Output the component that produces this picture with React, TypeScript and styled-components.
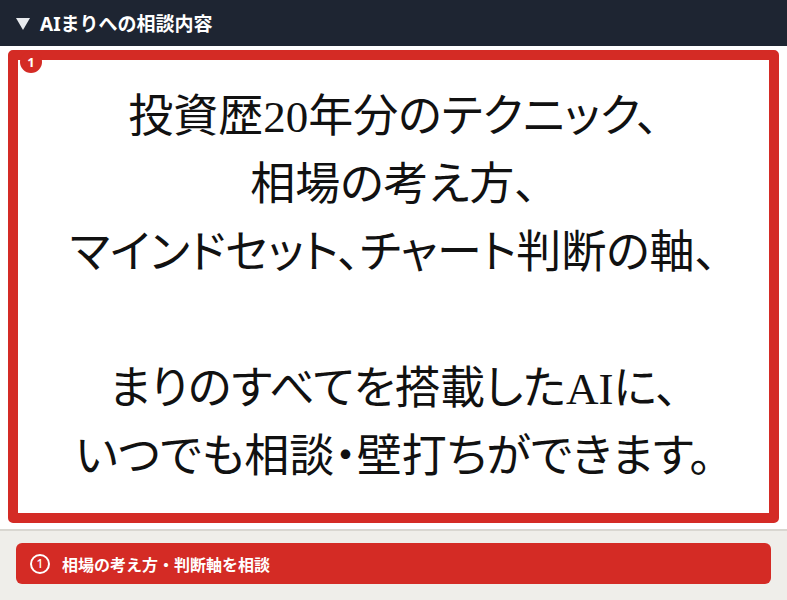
import React from 'react'
import styled, { createGlobalStyle } from 'styled-components'

const GlobalStyle = createGlobalStyle`
  html, body {
    margin: 0;
    padding: 0;
    background: #efeeea;
  }
  body {
    font-family: "Noto Sans", "Noto Sans CJK JP", sans-serif;
  }
`

const Page = styled.div`
  width: 787px;
  height: 600px;
  display: flex;
  flex-direction: column;
  background: #efeeea;
  overflow: hidden;
`

const Header = styled.div`
  height: 46px;
  flex-shrink: 0;
  background: #1e2532;
  display: flex;
  align-items: center;
  gap: 10px;
  padding-left: 16px;
  color: #fff;
  font-family: "Noto Sans", "Noto Sans CJK JP", sans-serif;
  font-weight: 700;
  font-size: 19px;
`

const Caret = styled.span`
  width: 0;
  height: 0;
  border-left: 7px solid transparent;
  border-right: 7px solid transparent;
  border-top: 12px solid #e8eaee;
  margin-top: 1px;
`

const Stage = styled.div`
  background: #fff;
  padding: 4px 8px 6px 8px;
  border-bottom: 2px solid #d9d7d1;
`

const Slide = styled.div`
  position: relative;
  height: 453px;
  border: 10px solid #d42b25;
  border-radius: 5px;
  background: #fff;
  display: flex;
  align-items: center;
  justify-content: center;
`

const Badge = styled.span`
  position: absolute;
  left: 2px;
  top: -9px;
  width: 22px;
  height: 22px;
  border-radius: 50%;
  background: #d42b25;
  color: #fff;
  font-family: "Noto Sans", sans-serif;
  font-weight: 700;
  font-size: 13px;
  line-height: 22px;
  text-align: center;
`

const Message = styled.p`
  margin: 0;
  text-align: center;
  color: #111;
  font-family: "Liberation Serif", "Noto Sans CJK JP", serif;
  font-size: 45px;
  line-height: 68px;
  font-weight: 400;
  font-feature-settings: "palt";
`

const Footer = styled.div`
  padding: 12px 16px 0 16px;
`

const ActionButton = styled.div`
  height: 41px;
  border-radius: 6px;
  background: #d42b25;
  display: flex;
  align-items: center;
  gap: 12px;
  padding-left: 14px;
  color: #fff;
  font-family: "Noto Sans", "Noto Sans CJK JP", sans-serif;
  font-weight: 700;
  font-size: 16px;
`

const CircleNum = styled.span`
  width: 16px;
  height: 16px;
  border: 2px solid #fff;
  border-radius: 50%;
  display: flex;
  align-items: center;
  justify-content: center;
  font-size: 12px;
  font-weight: 500;
  line-height: 1;
`

const lines = [
  '投資歴20年分のテクニック、',
  '相場の考え方、',
  'マインドセット、チャート判断の軸、',
  '',
  'まりのすべてを搭載したAIに、',
  'いつでも相談・壁打ちができます。',
]

export default function App() {
  return (
    <Page>
      <GlobalStyle />
      <Header>
        <Caret />
        <span>AIまりへの相談内容</span>
      </Header>
      <Stage>
        <Slide>
          <Badge>1</Badge>
          <Message>
            {lines.map((line, i) => (
              <React.Fragment key={i}>
                {line}
                {i < lines.length - 1 && <br />}
              </React.Fragment>
            ))}
          </Message>
        </Slide>
      </Stage>
      <Footer>
        <ActionButton>
          <CircleNum>1</CircleNum>
          <span>相場の考え方・判断軸を相談</span>
        </ActionButton>
      </Footer>
    </Page>
  )
}
